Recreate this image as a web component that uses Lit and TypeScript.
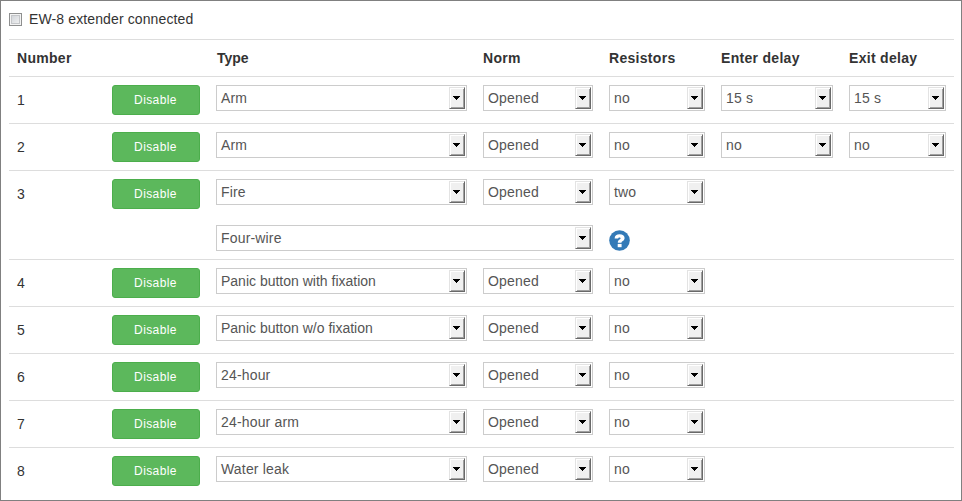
import { LitElement, html, css, svg, nothing } from "lit";
import { customElement, property } from "lit/decorators.js";

interface Zone {
  type: string;
  norm: string;
  resistors: string;
  enter?: string;
  exit?: string;
  wiring?: string;
}

const zones: Zone[] = [
  { type: "Arm", norm: "Opened", resistors: "no", enter: "15 s", exit: "15 s" },
  { type: "Arm", norm: "Opened", resistors: "no", enter: "no", exit: "no" },
  { type: "Fire", norm: "Opened", resistors: "two", wiring: "Four-wire" },
  { type: "Panic button with fixation", norm: "Opened", resistors: "no" },
  { type: "Panic button w/o fixation", norm: "Opened", resistors: "no" },
  { type: "24-hour", norm: "Opened", resistors: "no" },
  { type: "24-hour arm", norm: "Opened", resistors: "no" },
  { type: "Water leak", norm: "Opened", resistors: "no" },
];

@customElement("select-box")
export class SelectBox extends LitElement {
  @property() value = "";

  static styles = css`
    :host {
      display: flex;
      box-sizing: border-box;
      height: 26px;
      padding: 1px;
      border: 1px solid #ccc;
      background: #fff;
      color: #555;
    }
    .value {
      flex: 1;
      padding-left: 3px;
      line-height: 22px;
      letter-spacing: 0.17px;
      white-space: nowrap;
    }
    .value.long {
      letter-spacing: 0;
    }
    .arrow {
      display: flex;
      align-items: center;
      justify-content: center;
      box-sizing: border-box;
      width: 16px;
      height: 22px;
      background: #f0f0f0;
      border: 1px solid;
      border-color: #e3e3e3 #696969 #696969 #e3e3e3;
      box-shadow: inset 1px 1px #fff, inset -1px -1px #a0a0a0;
    }
    .glyph {
      display: block;
    }
  `;

  render() {
    return html`
      <span class=${this.value.length > 12 ? "value long" : "value"}>${this.value}</span>
      <span class="arrow">
        <svg class="glyph" width="8" height="4" shape-rendering="crispEdges">
          ${[0, 1, 2, 3].map(
            (i) => svg`<rect x=${i} y=${i} width=${7 - 2 * i} height="1" />`
          )}
        </svg>
      </span>
    `;
  }
}

@customElement("app-root")
export class AppRoot extends LitElement {
  static styles = css`
    :host {
      display: block;
      box-sizing: border-box;
      height: 501px;
      padding: 0 7px 0 8px;
      border: 1px solid #808080;
      background: #fff;
      color: #333;
      font: 14px/20px "Liberation Sans", Arial, sans-serif;
    }
    .option {
      display: flex;
      align-items: center;
      box-sizing: border-box;
      height: 38px;
      padding-bottom: 2px;
      letter-spacing: 0.12px;
    }
    .check {
      box-sizing: border-box;
      width: 13px;
      height: 13px;
      margin: 1px 7px 0 0;
      border: 1px solid #8e8f8f;
      background: linear-gradient(135deg, #cbcfd5, #f6f6f6);
      box-shadow: inset 0 0 0 1px #f4f4f4, inset 0 0 0 2px #c4c6c9;
    }
    .row {
      display: grid;
      grid-template-columns: 79px 88px 251px 110px 96px 112px 97px;
      column-gap: 16px;
      align-items: start;
      padding: 8px;
      border-top: 1px solid #ddd;
    }
    .head {
      font-weight: bold;
      letter-spacing: 0.3px;
    }
    .type-head {
      grid-column: 3;
      padding-left: 1px;
      letter-spacing: 0;
    }
    .number {
      line-height: 30px;
    }
    .disable {
      box-sizing: border-box;
      height: 30px;
      padding: 0 1px 0 0;
      border: 1px solid #4cae4c;
      border-radius: 3px;
      background: #5cb85c;
      color: #fff;
      font: 12px/28px "Liberation Sans", Arial, sans-serif;
      letter-spacing: 0.4px;
      text-align: center;
    }
    .wiring {
      grid-column: 3 / span 2;
      margin-top: 16px;
    }
    .help {
      display: block;
      margin-top: 21px;
      margin-bottom: -8px;
    }
  `;

  private renderZone(zone: Zone, index: number) {
    return html`
      <div class="row">
        <span class="number">${index + 1}</span>
        <button class="disable">Disable</button>
        <select-box .value=${zone.type}></select-box>
        <select-box .value=${zone.norm}></select-box>
        <select-box .value=${zone.resistors}></select-box>
        ${zone.enter ? html`<select-box .value=${zone.enter}></select-box>` : nothing}
        ${zone.exit ? html`<select-box .value=${zone.exit}></select-box>` : nothing}
        ${zone.wiring
          ? html`
              <select-box class="wiring" .value=${zone.wiring}></select-box>
              <svg class="help" width="21" height="21" viewBox="0 0 21 21">
                <circle cx="10.5" cy="10.5" r="10.3" fill="#337ab7" />
                <path
                  d="M5.6 8.5C5.700 5.500 7.700 4.200 10.600 4.200c3.100 0 5 1.500 5 3.800 0 1.700-1 2.500-2.100 3.200-.8.500-1 .8-1 1.600H8.800c0-2 .7-2.700 1.800-3.400.7-.4 1-.7 1-1.200 0-.6-.4-.8-1.100-.8-.8 0-1.200.3-1.300 1.100z"
                  fill="#fff"
                />
                <rect x="8.700" y="13.900" width="3.900" height="3.300" fill="#fff" />
              </svg>
            `
          : nothing}
      </div>
    `;
  }

  render() {
    return html`
      <div class="option">
        <span class="check"></span>
        <span>EW-8 extender connected</span>
      </div>
      <div class="row head">
        <span>Number</span>
        <span class="type-head">Type</span>
        <span>Norm</span>
        <span>Resistors</span>
        <span>Enter delay</span>
        <span>Exit delay</span>
      </div>
      ${zones.map((zone, i) => this.renderZone(zone, i))}
    `;
  }
}
